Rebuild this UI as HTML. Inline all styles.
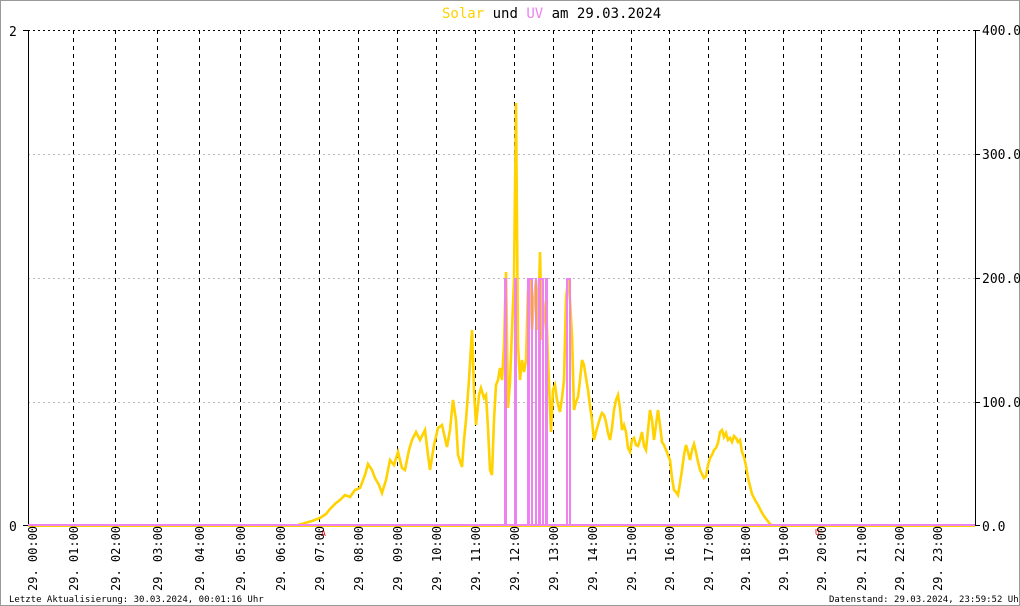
<!DOCTYPE html>
<html><head><meta charset="utf-8"><style>
html,body{margin:0;padding:0;background:#fff;}
svg{display:block;}
text{font-family:"DejaVu Sans Mono","Liberation Mono",monospace;}
</style></head><body>
<svg width="1020" height="606" viewBox="0 0 1020 606" xmlns="http://www.w3.org/2000/svg">
<rect x="0.5" y="0.5" width="1019" height="605" fill="#fff" stroke="#999"/>
<text x="442" y="18" font-size="14"><tspan fill="#ffd200">Solar</tspan><tspan fill="#000"> und </tspan><tspan fill="#ee82ee">UV</tspan><tspan fill="#000"> am 29.03.2024</tspan></text>
<g stroke="#bbb" stroke-dasharray="2,3">
<line x1="28" y1="154.5" x2="975" y2="154.5"/>
<line x1="28" y1="278.5" x2="975" y2="278.5"/>
<line x1="28" y1="402.5" x2="975" y2="402.5"/>
</g>
<line x1="28" y1="30.5" x2="975" y2="30.5" stroke="#000" stroke-dasharray="2,3"/>
<g stroke="#000" stroke-dasharray="4,4">
<line x1="73.5" y1="30" x2="73.5" y2="525"/><line x1="115.5" y1="30" x2="115.5" y2="525"/>
<line x1="157.5" y1="30" x2="157.5" y2="525"/><line x1="199.5" y1="30" x2="199.5" y2="525"/>
<line x1="240.5" y1="30" x2="240.5" y2="525"/><line x1="280.5" y1="30" x2="280.5" y2="525"/>
<line x1="319.5" y1="30" x2="319.5" y2="525"/><line x1="358.5" y1="30" x2="358.5" y2="525"/>
<line x1="397.5" y1="30" x2="397.5" y2="525"/><line x1="436.5" y1="30" x2="436.5" y2="525"/>
<line x1="475.5" y1="30" x2="475.5" y2="525"/><line x1="514.5" y1="30" x2="514.5" y2="525"/>
<line x1="553.5" y1="30" x2="553.5" y2="525"/><line x1="592.5" y1="30" x2="592.5" y2="525"/>
<line x1="631.5" y1="30" x2="631.5" y2="525"/><line x1="669.5" y1="30" x2="669.5" y2="525"/>
<line x1="708.5" y1="30" x2="708.5" y2="525"/><line x1="745.5" y1="30" x2="745.5" y2="525"/>
<line x1="783.5" y1="30" x2="783.5" y2="525"/><line x1="821.5" y1="30" x2="821.5" y2="525"/>
<line x1="861.5" y1="30" x2="861.5" y2="525"/><line x1="899.5" y1="30" x2="899.5" y2="525"/>
<line x1="937.5" y1="30" x2="937.5" y2="525"/>
</g>
<line x1="28.5" y1="30" x2="28.5" y2="526" stroke="#000"/>
<line x1="975.5" y1="30" x2="975.5" y2="526" stroke="#000"/>
<line x1="23" y1="30.5" x2="28" y2="30.5" stroke="#000"/>
<line x1="23" y1="525.5" x2="28" y2="525.5" stroke="#000"/>
<g stroke="#000"><line x1="975" y1="30.5" x2="980" y2="30.5"/><line x1="975" y1="154.5" x2="980" y2="154.5"/><line x1="975" y1="278.5" x2="980" y2="278.5"/><line x1="975" y1="402.5" x2="980" y2="402.5"/><line x1="975" y1="525.5" x2="980" y2="525.5"/></g>
<text x="9" y="36" font-size="13">2</text>
<text x="9" y="531" font-size="13">0</text>
<g font-size="13" fill="#000">
<text x="982" y="35">400.0</text><text x="982" y="159">300.0</text><text x="982" y="283">200.0</text><text x="982" y="407">100.0</text><text x="982" y="531">0.0</text>
</g>
<line x1="28" y1="526" x2="975" y2="526" stroke="#ffd200" stroke-width="2"/>
<polyline fill="none" stroke="#ffd200" stroke-width="2.6" stroke-linejoin="miter" points="298,525 305,523 312,521 320,518 326,514 330,509 336,503 340,500 345,495 350,497 355,490 360,488 365,475 368,464 372,470 375,478 379,485 382,493 386,480 390,460 394,465 398,452 402,468 405,470 409,450 412,440 416,432 420,440 425,430 428,455 430,470 434,445 438,428 442,425 447,447 450,430 453,400 456,420 458,455 462,467 464,440 466,420 469,380 472,330 474,390 476,425 479,395 481,388 484,398 486,395 488,428 490,470 492,475 494,420 496,385 498,380 500,368 502,380 504,345 506,272 508,408 510,382 512,330 514,280 516,103 518,345 520,380 522,360 524,372 526,360 528,290 530,280 532,330 534,300 536,280 538,330 540,252 542,340 544,318 546,300 548,360 551,432 553,390 555,385 557,400 560,412 562,398 564,380 566,298 568,280 570,300 572,335 574,410 576,402 578,397 580,380 582,360 584,365 586,378 588,390 590,406 592,420 594,440 596,432 598,425 600,418 602,413 604,415 606,422 608,433 610,440 612,428 614,410 616,400 618,395 620,408 622,430 624,425 626,432 628,448 630,452 632,440 634,438 636,445 638,446 640,440 642,432 644,446 646,450 648,430 650,410 652,420 654,440 656,425 658,410 660,425 662,442 664,445 666,450 668,455 670,460 672,478 674,490 676,492 678,495 680,483 682,470 684,455 686,445 688,452 690,460 692,450 694,444 696,452 698,462 700,470 702,474 704,478 706,476 708,465 710,458 712,455 714,450 716,448 718,443 720,432 722,430 724,437 726,433 728,440 730,438 732,442 734,436 736,438 738,442 740,440 742,452 744,457 746,466 748,478 750,486 752,494 755,500 758,505 761,511 764,516 767,520 770,524 773,526"/>
<line x1="28" y1="525" x2="975" y2="525" stroke="#ee82ee" stroke-width="2"/>
<g fill="#ee82ee">
<rect x="504" y="278" width="3" height="247"/><rect x="514" y="278" width="3" height="247"/>
<rect x="527" y="278" width="3" height="247"/><rect x="531" y="278" width="2" height="247"/>
<rect x="535" y="278" width="2" height="247"/><rect x="538" y="278" width="3" height="247"/>
<rect x="542" y="278" width="2" height="247"/><rect x="545" y="278" width="3" height="247"/>
<rect x="566" y="278" width="2" height="247"/><rect x="569" y="278" width="2" height="247"/>
<rect x="566" y="278" width="5" height="2"/><rect x="527" y="278" width="6" height="2"/><rect x="538" y="278" width="6" height="2"/>
</g>
<text x="321" y="536" font-size="8" fill="#e00">A</text>
<text x="815" y="535" font-size="8" fill="#e00">U</text>
<g font-size="12" fill="#000">
<text transform="translate(37,591) rotate(-90)">29. 00:00</text>
<text transform="translate(78,591) rotate(-90)">29. 01:00</text>
<text transform="translate(120,591) rotate(-90)">29. 02:00</text>
<text transform="translate(162,591) rotate(-90)">29. 03:00</text>
<text transform="translate(204,591) rotate(-90)">29. 04:00</text>
<text transform="translate(245,591) rotate(-90)">29. 05:00</text>
<text transform="translate(285,591) rotate(-90)">29. 06:00</text>
<text transform="translate(324,591) rotate(-90)">29. 07:00</text>
<text transform="translate(363,591) rotate(-90)">29. 08:00</text>
<text transform="translate(402,591) rotate(-90)">29. 09:00</text>
<text transform="translate(441,591) rotate(-90)">29. 10:00</text>
<text transform="translate(480,591) rotate(-90)">29. 11:00</text>
<text transform="translate(519,591) rotate(-90)">29. 12:00</text>
<text transform="translate(558,591) rotate(-90)">29. 13:00</text>
<text transform="translate(597,591) rotate(-90)">29. 14:00</text>
<text transform="translate(636,591) rotate(-90)">29. 15:00</text>
<text transform="translate(674,591) rotate(-90)">29. 16:00</text>
<text transform="translate(713,591) rotate(-90)">29. 17:00</text>
<text transform="translate(750,591) rotate(-90)">29. 18:00</text>
<text transform="translate(788,591) rotate(-90)">29. 19:00</text>
<text transform="translate(826,591) rotate(-90)">29. 20:00</text>
<text transform="translate(866,591) rotate(-90)">29. 21:00</text>
<text transform="translate(904,591) rotate(-90)">29. 22:00</text>
<text transform="translate(942,591) rotate(-90)">29. 23:00</text>
</g>
<text x="9" y="602" font-size="9" fill="#000">Letzte Aktualisierung: 30.03.2024, 00:01:16 Uhr</text>
<text x="829" y="602" font-size="9" fill="#000">Datenstand: 29.03.2024, 23:59:52 Uhr</text>
</svg>
</body></html>
